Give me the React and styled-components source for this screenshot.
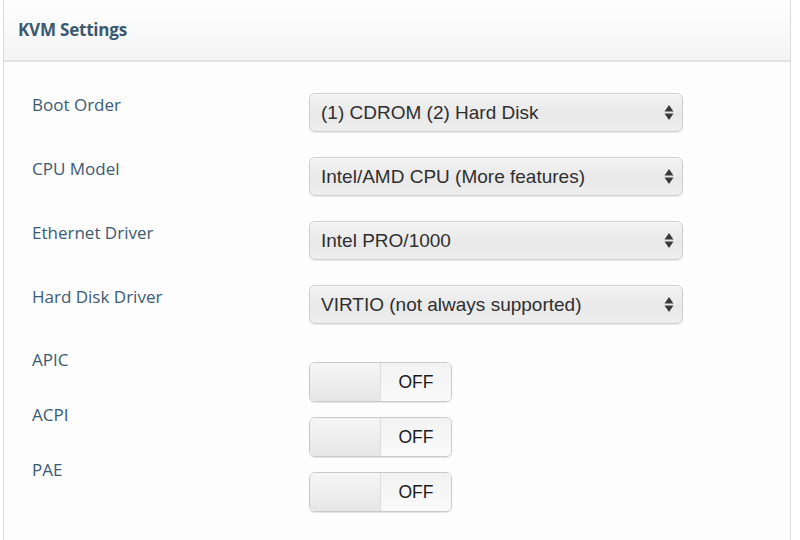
import React from "react";
import styled, { createGlobalStyle } from "styled-components";

const Global = createGlobalStyle`
  html, body { margin: 0; padding: 0; background: #ffffff; }
  body { font-family: "Lato", "Open Sans", sans-serif; }
`;

const Panel = styled.section`
  margin-left: 3px;
  width: 786px;
  height: 540px;
  border-left: 1px solid #dcdcdc;
  border-right: 1px solid #dcdcdc;
  background: #fdfdfd;
  box-sizing: content-box;
`;

const Header = styled.header`
  height: 62px;
  border-bottom: 2px solid #e2e2e2;
  background: linear-gradient(#fefefe, #f4f4f4);
  display: flex;
  align-items: center;
  padding-left: 14px;
  padding-bottom: 2px;
  box-sizing: border-box;
`;

const Title = styled.h2`
  margin: 0;
  font-family: "Open Sans", "Lato", sans-serif;
  font-size: 17px;
  font-weight: 700;
  color: #3a5870;
  letter-spacing: -0.2px;
`;

const Body = styled.div`
  padding: 28px 0 0 28px;
  display: flex;
  flex-direction: column;
`;

const Row = styled.div`
  display: grid;
  grid-template-columns: 277px 374px;
  height: ${(p) => p.$h}px;
`;

const Label = styled.div`
  font-family: "Open Sans", "Lato", sans-serif;
  font-size: 17px;
  color: #3b5a74;
  line-height: 22px;
  padding-top: ${(p) => p.$top}px;
`;

const SelectBox = styled.div`
  height: 39px;
  border: 1px solid #cfcfcf;
  border-radius: 6px;
  background: linear-gradient(#f3f3f3, #e9e9e9 55%, #eeeeee);
  box-shadow: inset 0 1px 0 #fafafa, 0 1px 1px rgba(0, 0, 0, 0.08);
  box-sizing: border-box;
  display: flex;
  align-items: center;
  justify-content: space-between;
  padding: 0 8px 0 11px;
  font-family: "Liberation Sans", Arial, sans-serif;
  font-size: 19px;
  color: #2f2f2f;
  margin-top: 3px;
`;

const Arrows = () => (
  <svg width="10" height="17" viewBox="0 0 10 17">
    <path d="M5 1 L9.5 7.5 L0.5 7.5 Z" fill="#3a3a3a" />
    <path d="M5 16 L9.5 9.5 L0.5 9.5 Z" fill="#3a3a3a" />
  </svg>
);

const Toggle = styled.div`
  width: 143px;
  height: 40px;
  border: 1px solid #c9c9c9;
  border-radius: 6px;
  box-sizing: border-box;
  display: grid;
  grid-template-columns: 71px 1fr;
  overflow: hidden;
  box-shadow: 0 1px 1px rgba(0, 0, 0, 0.1);
  margin-top: 16px;
`;

const Knob = styled.div`
  background: linear-gradient(#f6f6f6, #e6e6e6);
  border-right: 1px solid #dcdcdc;
`;

const State = styled.div`
  background: linear-gradient(#f2f2f2, #fafafa);
  display: flex;
  align-items: center;
  justify-content: center;
  font-family: "Liberation Sans", Arial, sans-serif;
  font-size: 17.5px;
  color: #1a1a1a;
  padding-top: 1px;
`;

const selects = [
  ["Boot Order", "(1) CDROM (2) Hard Disk"],
  ["CPU Model", "Intel/AMD CPU (More features)"],
  ["Ethernet Driver", "Intel PRO/1000"],
  ["Hard Disk Driver", "VIRTIO (not always supported)"],
];

const toggles = ["APIC", "ACPI", "PAE"];

export default function App() {
  return (
    <>
      <Global />
      <Panel>
        <Header>
          <Title>KVM Settings</Title>
        </Header>
        <Body>
          {selects.map(([l, v]) => (
            <Row key={l} $h={64}>
              <Label $top={4}>{l}</Label>
              <SelectBox>
                <span>{v}</span>
                <Arrows />
              </SelectBox>
            </Row>
          ))}
          {toggles.map((l) => (
            <Row key={l} $h={55}>
              <Label $top={3}>{l}</Label>
              <div>
                <Toggle>
                  <Knob />
                  <State>OFF</State>
                </Toggle>
              </div>
            </Row>
          ))}
        </Body>
      </Panel>
    </>
  );
}
